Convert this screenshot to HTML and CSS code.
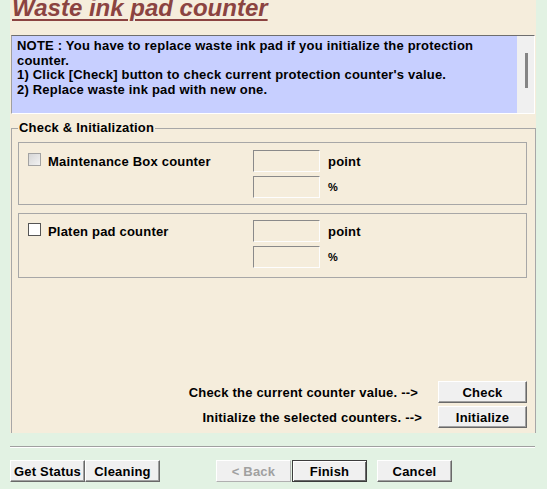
FILE: index.html
```html
<!DOCTYPE html>
<html>
<head>
<meta charset="utf-8">
<link rel="stylesheet" href="styles.css">
</head>
<body>
<div class="window">
  <div class="panel">
    <div class="title">Waste ink pad counter</div>
    <div class="note">
      <div class="note-text">NOTE : You have to replace waste ink pad if you initialize the protection counter.<br>1) Click [Check] button to check current protection counter's value.<br>2) Replace waste ink pad with new one.</div>
      <div class="scrollbar"><div class="thumb"></div></div>
    </div>
    <fieldset class="frame">
      <legend class="legend">Check &amp; Initialization</legend>
      <div class="group">
        <div class="check-cell"><span class="checkbox checkbox-gray"></span><span class="label">Maintenance Box counter</span></div>
        <div class="field"></div>
        <div class="unit">point</div>
        <div class="blank"></div>
        <div class="field"></div>
        <div class="unit unit-pct">%</div>
      </div>
      <div class="group group-second">
        <div class="check-cell"><span class="checkbox"></span><span class="label">Platen pad counter</span></div>
        <div class="field"></div>
        <div class="unit">point</div>
        <div class="blank"></div>
        <div class="field"></div>
        <div class="unit unit-pct">%</div>
      </div>
      <div class="actions">
        <div class="action-row">
          <span class="action-text action-text-check">Check the current counter value. --&gt;</span>
          <button class="btn btn-wide">Check</button>
        </div>
        <div class="action-row">
          <span class="action-text">Initialize the selected counters. --&gt;</span>
          <button class="btn btn-wide">Initialize</button>
        </div>
      </div>
    </fieldset>
  </div>
  <div class="separator"></div>
  <div class="footer">
    <div class="footer-left">
      <button class="btn">Get Status</button>
      <button class="btn">Cleaning</button>
    </div>
    <div class="footer-nav">
      <button class="btn btn-disabled">&lt; Back</button>
      <button class="btn btn-default">Finish</button>
      <button class="btn btn-cancel">Cancel</button>
    </div>
  </div>
</div>
</body>
</html>
```

FILE: styles.css
```css
html, body {
  margin: 0;
  padding: 0;
}
body {
  background: #e2f2e3;
  font-family: "Liberation Sans", Arial, sans-serif;
  font-weight: bold;
  font-size: 13px;
  letter-spacing: 0.2px;
  color: #000;
  width: 547px;
  height: 489px;
  overflow: hidden;
}
.window {
  display: flex;
  flex-direction: column;
}
.panel {
  margin-left: 10px;
  width: 526px;
  height: 433px;
  background: #f5eddc;
  overflow: hidden;
  display: flex;
  flex-direction: column;
}
.title {
  margin-top: -4px;
  height: 39px;
  padding-left: 2px;
  font-size: 24px;
  line-height: 24px;
  letter-spacing: 0;
  font-style: italic;
  font-weight: bold;
  color: #8b4341;
  text-decoration: underline;
  text-decoration-thickness: 2px;
  text-underline-offset: 3px;
}
.note {
  margin-left: 1px;
  width: 522px;
  height: 77px;
  display: flex;
  border-top: 1px solid #6e6e6e;
  border-left: 1px solid #a0a0a0;
  border-right: 1px solid #ffffff;
  border-bottom: 1px solid #ffffff;
}
.note-text {
  flex: 1;
  background: #c7cfff;
  padding: 3px 4px 0 5px;
  line-height: 14.5px;
}
.scrollbar {
  width: 17px;
  background: #f0f0f0;
  position: relative;
}
.thumb {
  position: absolute;
  left: 8px;
  top: 17px;
  width: 3px;
  height: 35px;
  background: #858585;
}
.frame {
  margin: 7px 0 0 1px;
  padding: 0 8px 0 6px;
  min-width: 0;
  flex: 1;
  border: 1px solid #a7a7a7;
  border-bottom: none;
}
.legend {
  padding: 0 1px;
  line-height: 14px;
}
.group {
  margin-top: 7px;
  border: 1px solid #a7a7a7;
  padding: 7px 0 6px 9px;
  display: grid;
  grid-template-columns: 217px 67px auto;
  grid-template-rows: 22px 22px;
  column-gap: 8px;
  row-gap: 4px;
  align-items: center;
}
.group-second {
  margin-top: 8px;
  padding-top: 6px;
  padding-bottom: 9px;
}
.check-cell {
  display: flex;
  align-items: center;
  gap: 7px;
  height: 22px;
}
.checkbox {
  width: 11px;
  height: 11px;
  border: 1px solid #555;
  background: #fff;
  margin-top: -4px;
}
.checkbox-gray {
  border-color: #a2a2a2;
  background: linear-gradient(135deg, #d6d6d6, #f2f2f2);
}
.field {
  height: 20px;
  border-top: 1px solid #8a8a8a;
  border-left: 1px solid #8a8a8a;
  border-right: 1px solid #fdfdfd;
  border-bottom: 1px solid #fdfdfd;
  background: #f5eddc;
}
.unit-pct {
  font-size: 11px;
}
.actions {
  margin-top: 103px;
  display: flex;
  flex-direction: column;
  gap: 3px;
}
.action-row {
  display: flex;
  justify-content: flex-end;
  align-items: center;
  gap: 16px;
}
.action-text-check {
  margin-right: 4px;
}
.btn {
  font-family: "Liberation Sans", Arial, sans-serif;
  font-weight: bold;
  font-size: 13px;
  letter-spacing: 0.2px;
  color: #000;
  width: 75px;
  height: 22px;
  padding: 0;
  margin: 0;
  background: #f0f0f0;
  border: 1px solid;
  border-color: #ffffff #696969 #696969 #ffffff;
  box-shadow: inset -1px -1px 0 #a0a0a0;
}
.btn-wide {
  width: 89px;
}
.separator {
  margin: 13px 0 0 10px;
  width: 525px;
  height: 1px;
  background: #a0a0a0;
  border-bottom: 1px solid #ffffff;
}
.footer {
  margin-top: 12px;
  display: flex;
}
.footer-left {
  margin-left: 10px;
  display: flex;
}
.footer-nav {
  margin-left: 56px;
  display: flex;
}
.btn-disabled {
  color: #a0a0a0;
  border-color: #ffffff #b0b0b0 #b0b0b0 #ffffff;
  box-shadow: none;
}
.btn-default {
  margin-left: 1px;
  border: 1px solid #3c3c3c;
  box-shadow: inset 1px 1px 0 #ffffff, inset -1px -1px 0 #696969;
}
.btn-cancel {
  margin-left: 10px;
}
```
